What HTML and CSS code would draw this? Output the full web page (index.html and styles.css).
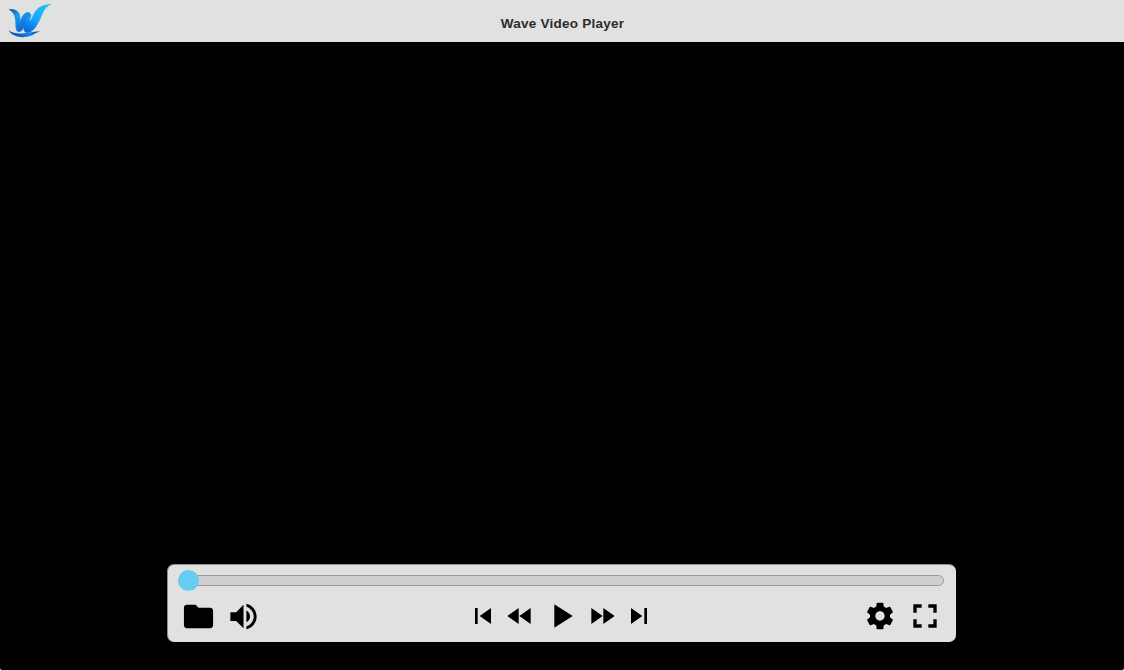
FILE: index.html
```
<!DOCTYPE html>
<html lang="en">
<head>
<meta charset="utf-8">
<title>Wave Video Player</title>
<link rel="stylesheet" href="styles.css">
</head>
<body>
<div class="window">
  <header class="titlebar">
    <svg class="logo" viewBox="0 0 60 42" aria-hidden="true">
      <defs>
        <linearGradient id="wave" x1="0.8" y1="0" x2="0.4" y2="1">
          <stop offset="0" stop-color="#1fc0fb"/>
          <stop offset="0.6" stop-color="#18a4fa"/>
          <stop offset="1" stop-color="#0b6ce0"/>
        </linearGradient>
        <linearGradient id="stroke" x1="0" y1="0" x2="0.6" y2="1">
          <stop offset="0" stop-color="#0a4a94"/>
          <stop offset="0.35" stop-color="#12a0f0"/>
          <stop offset="1" stop-color="#0f62d2"/>
        </linearGradient>
        <linearGradient id="swash" x1="0" y1="0" x2="1" y2="0">
          <stop offset="0" stop-color="#0a4f9c"/>
          <stop offset="0.35" stop-color="#0c63c8"/>
          <stop offset="0.65" stop-color="#1583e6"/>
          <stop offset="1" stop-color="#0b4f9e"/>
        </linearGradient>
      </defs>
      <path fill="url(#swash)" d="M8.200 30.300C13 33.400 18 34 24 33.300C30 32.500 35 31.300 40.300 31.200C36 32.200 33 35.800 27 36.800C19.500 38.200 12 35.800 8.200 30.300Z"/>
      <path fill="url(#stroke)" stroke="url(#stroke)" stroke-width="0.7" d="M9.400 9.700C15 8.800 19 11.500 19.800 16C20.200 19 19.600 20.300 19.800 22C21.800 17.500 23.500 13.300 27.200 12.600C30 12.200 31.300 14.500 30.500 17L25.600 24C23.500 28.500 21.800 31.500 18.900 31.600C15.500 31.700 16 26 15.700 21.500C15.400 16 13.500 11.500 9.400 9.700Z"/>
      <path fill="url(#wave)" stroke="url(#wave)" stroke-width="0.7" d="M30.800 15.500C30 18.500 29.800 20.500 30 22C31.500 19.500 32.500 17 34 14C36.800 8 42 5 50.500 4.200C45 7.200 43.200 11 41 16.500C38 23.500 34.300 31.500 27.800 32.600C23.700 33 23.400 28.500 24.600 24.500C25.500 21 27 15.500 30.800 15.500Z"/>
    </svg>
    <h1 class="title">Wave Video Player</h1>
  </header>
  <main class="stage">
    <section class="panel">
      <div class="seek"><div class="track"></div><div class="thumb"></div></div>
      <div class="controls">
        <div class="group group-left">
          <svg class="icon icon-medium" viewBox="0 0 24 24"><path d="M10 4H4c-1.100 0-1.990.9-1.990 2L2 18c0 1.100.9 2 2 2h16c1.100 0 2-.9 2-2V8c0-1.100-.9-2-2-2h-8l-2-2z"/></svg>
          <svg class="icon icon-medium" viewBox="0 0 24 24"><path d="M3 9v6h4l5 5V4L7 9H3zm13.500 3c0-1.770-1.020-3.290-2.500-4.030v8.050c1.480-.73 2.500-2.250 2.500-4.020zM14 3.230v2.060c2.890.86 5 3.540 5 6.710s-2.110 5.850-5 6.710v2.060c4.010-.91 7-4.490 7-8.770s-2.990-7.860-7-8.770z"/></svg>
        </div>
        <div class="group group-center">
          <svg class="icon icon-small" viewBox="0 0 24 24"><path d="M6 6h2v12H6zm3.500 6l8.500 6V6z"/></svg>
          <svg class="icon icon-small" viewBox="0 0 24 24"><path d="M11 18V6l-8.500 6 8.500 6zm.5-6l8.500 6V6l-8.500 6z"/></svg>
          <svg class="icon icon-large" viewBox="0 0 24 24"><path d="M8 5v14l11-7z"/></svg>
          <svg class="icon icon-small" viewBox="0 0 24 24"><path d="M4 18l8.500-6L4 6v12zm9-12v12l8.500-6L13 6z"/></svg>
          <svg class="icon icon-small" viewBox="0 0 24 24"><path d="M6 18l8.500-6L6 6v12zM16 6v12h2V6h-2z"/></svg>
        </div>
        <div class="group group-right">
          <svg class="icon icon-small" viewBox="0 0 24 24"><path d="M19.430 12.980c.04-.32.07-.64.07-.98s-.03-.66-.07-.98l2.110-1.650c.19-.15.24-.42.12-.64l-2-3.460c-.12-.22-.39-.3-.61-.22l-2.490 1c-.52-.4-1.080-.73-1.690-.98l-.38-2.650C14.460 2.180 14.250 2 14 2h-4c-.25 0-.46.18-.49.42l-.38 2.650c-.61.25-1.170.59-1.690.98l-2.490-1c-.23-.09-.49 0-.61.22l-2 3.460c-.13.22-.07.49.12.64l2.110 1.650c-.04.32-.07.65-.07.98s.03.66.07.98l-2.110 1.650c-.19.15-.24.42-.12.64l2 3.460c.12.22.39.3.61.22l2.490-1c.52.4 1.080.73 1.690.98l.38 2.650c.03.24.24.42.49.42h4c.25 0 .46-.18.49-.42l.38-2.650c.61-.25 1.170-.59 1.690-.98l2.490 1c.23.09.49 0 .61-.22l2-3.460c.12-.22.07-.49-.12-.64l-2.110-1.650zM12 15.500c-1.930 0-3.500-1.570-3.500-3.500s1.570-3.500 3.500-3.500 3.500 1.570 3.500 3.500-1.570 3.500-3.500 3.500z"/></svg>
          <svg class="icon icon-large" viewBox="0 0 24 24"><path d="M7 14H5v5h5v-2H7v-3zm-2-4h2V7h3V5H5v5zm12 7h-3v2h5v-5h-2v3zM14 5v2h3v3h2V5h-5z"/></svg>
        </div>
      </div>
    </section>
  </main>
</div>
</body>
</html>
```
FILE: styles.css
```
* {
  box-sizing: border-box;
}

body {
  margin: 0;
  background: #fff;
  font-family: "Liberation Sans", Arial, sans-serif;
}

.window {
  display: flex;
  flex-direction: column;
  height: 100vh;
  overflow: hidden;
  background: #000;
  border-radius: 0 0 2px 2px;
}

.titlebar {
  display: grid;
  grid-template-columns: 60px 1fr 60px;
  align-items: center;
  height: 42px;
  background: #e1e1e1;
}

.logo {
  display: block;
  width: 60px;
  height: 42px;
}

.title {
  margin: 0;
  padding-top: 5px;
  padding-left: 1px;
  font-size: 13.500px;
  line-height: 16px;
  font-weight: bold;
  letter-spacing: 0.250px;
  text-align: center;
  color: #2c2c2c;
}

.stage {
  flex: 1;
  display: flex;
  justify-content: center;
  align-items: flex-end;
  padding-bottom: 28px;
  padding-right: 1px;
}

.panel {
  width: 789px;
  height: 78px;
  padding-top: 5px;
  background: #e1e1e1;
  border: 1px solid #8c8c8c;
  border-width: 1px 0 0 1px;
  border-radius: 7px;
}

.seek {
  display: grid;
  align-items: center;
  height: 21px;
  margin: 0 12px 0 10px;
}

.track,
.thumb {
  grid-area: 1 / 1;
}

.track {
  height: 11px;
  background: #cfcfcf;
  border: 1px solid #999;
  border-radius: 6px;
}

.thumb {
  width: 21px;
  height: 21px;
  background: #66cdf0;
  border-radius: 50%;
}

.controls {
  display: grid;
  grid-template-columns: 1fr auto 1fr;
  align-items: center;
  height: 50px;
  margin-right: 2px;
}

.group {
  display: flex;
  align-items: center;
}

.group-left {
  gap: 10px;
  padding-left: 12.500px;
}

.group-center {
  gap: 5px;
}

.group-right {
  justify-content: flex-end;
  gap: 9px;
  padding-right: 9px;
}

.icon {
  display: block;
  fill: #000;
}

.icon-small {
  width: 32px;
  height: 32px;
}

.icon-medium {
  width: 35px;
  height: 35px;
}

.icon-large {
  width: 40px;
  height: 40px;
}
```
